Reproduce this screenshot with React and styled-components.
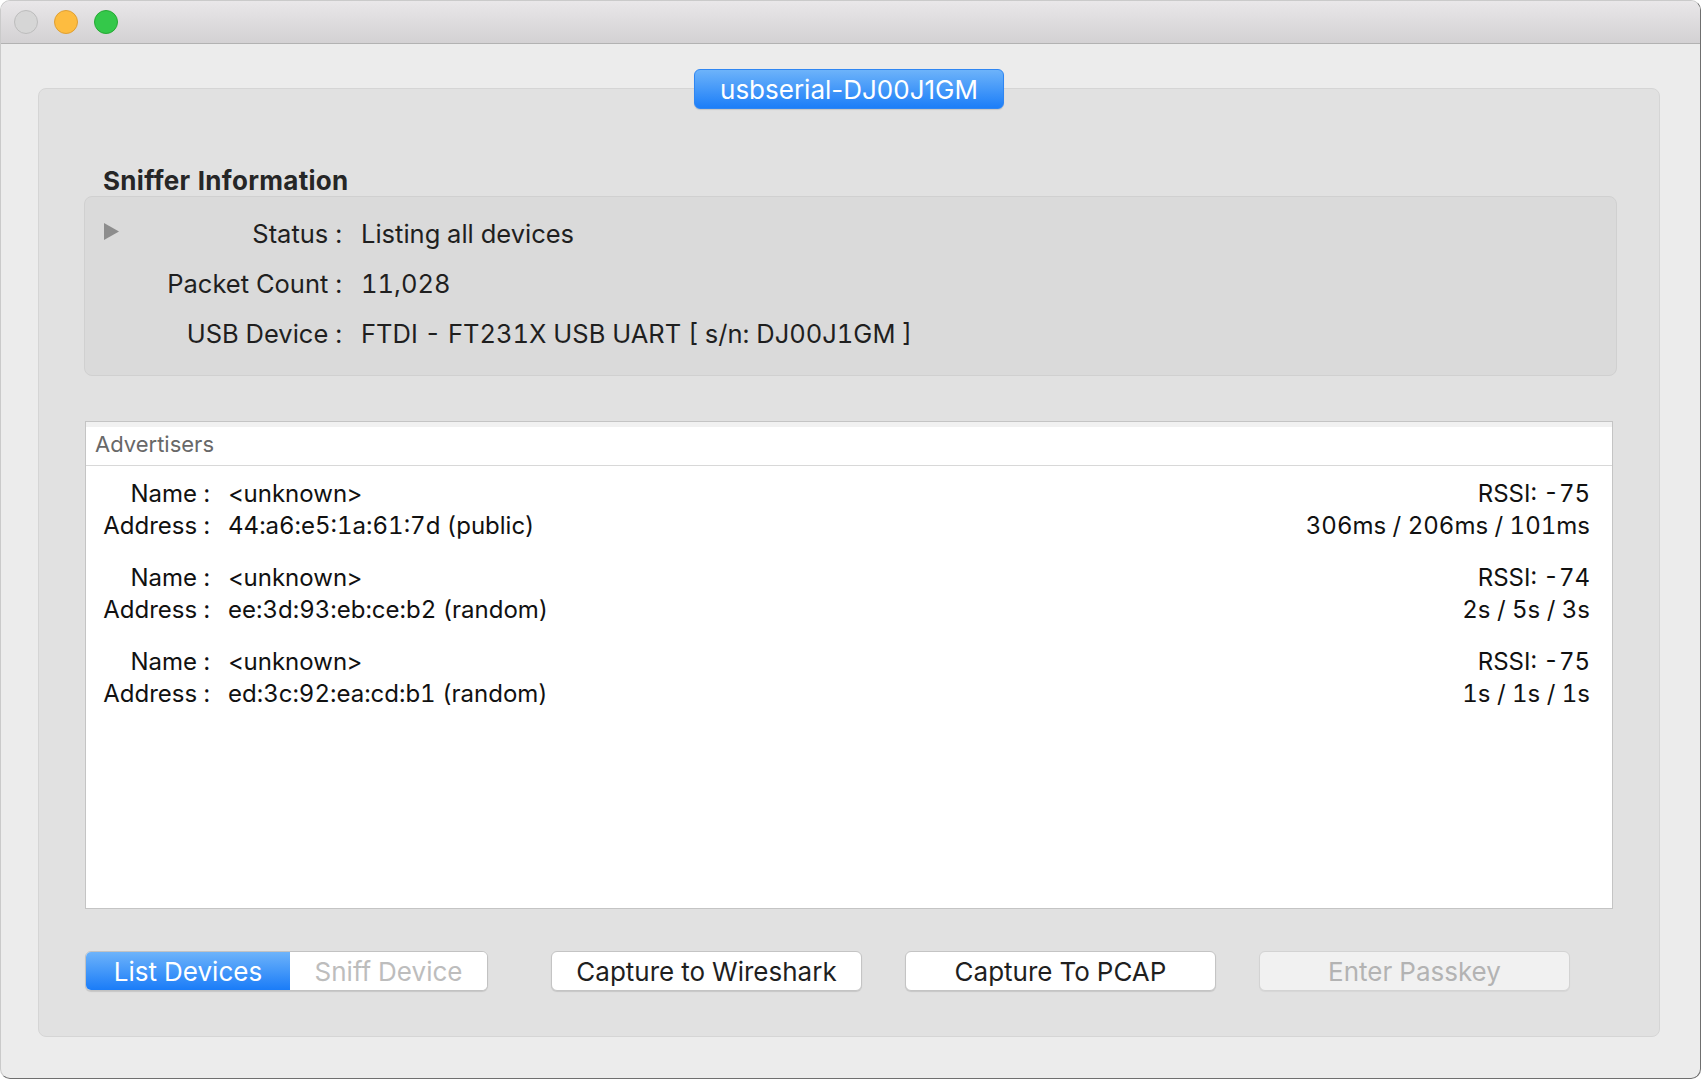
import styled, { createGlobalStyle } from "styled-components";

const GlobalStyle = createGlobalStyle`
  html, body {
    margin: 0;
    padding: 0;
    background: #ffffff;
  }
  body {
    font-family: Inter, "Noto Sans", "Liberation Sans", sans-serif;
    font-feature-settings: "tnum";
    color: #1f1f1f;
  }
  * {
    box-sizing: border-box;
  }
`;

const Window = styled.div`
  width: 1701px;
  height: 1079px;
  display: flex;
  flex-direction: column;
  background: #ececec;
  border: 1px solid #6f6f6f;
  border-top-color: #cacaca;
  border-left-color: #cacaca;
  border-radius: 10px;
  overflow: hidden;
`;

const TitleBar = styled.div`
  flex: none;
  height: 43px;
  display: flex;
  align-items: center;
  gap: 16px;
  padding-left: 13px;
  background: linear-gradient(#e9e7e9, #d3d1d3);
  border-bottom: 1px solid #b2b2b2;
`;

const Light = styled.span`
  width: 24px;
  height: 24px;
  border-radius: 50%;
  background: ${(p) => p.$fill};
  border: 1px solid ${(p) => p.$edge};
`;

const Content = styled.div`
  flex: 1;
  display: flex;
  flex-direction: column;
  padding: 25px 40px 41px 37px;
`;

const TabRow = styled.div`
  position: relative;
  z-index: 1;
  display: flex;
  justify-content: center;
`;

const TabButton = styled.div`
  width: 310px;
  height: 40px;
  display: flex;
  align-items: center;
  justify-content: center;
  border-radius: 6px;
  border: 1px solid #2f86f2;
  background: linear-gradient(#6db3fa, #1c7ef8);
  color: #ffffff;
  font-size: 26px;
  font-feature-settings: normal;
  box-shadow: 0 1px 1px rgba(0, 0, 0, 0.12);
`;

const Group = styled.div`
  flex: 1;
  margin-top: -21px;
  display: flex;
  flex-direction: column;
  padding: 76px 42px 0 45px;
  background: #e1e1e1;
  border: 1px solid #d5d5d5;
  border-radius: 8px;
`;

const Heading = styled.div`
  height: 31px;
  line-height: 31px;
  padding-left: 19px;
  font-size: 26px;
  font-weight: 700;
  letter-spacing: 0.3px;
  color: #262626;
`;

const InfoBox = styled.div`
  height: 180px;
  padding: 11px 0 17px 19px;
  background: #dadada;
  border: 1px solid #d0d0d0;
  border-radius: 8px;
`;

const InfoRow = styled.div`
  height: 50px;
  display: flex;
  align-items: center;
  font-size: 25.5px;
`;

const Disclosure = styled.span`
  width: 15px;
  display: flex;
  align-items: center;
  margin-top: -3px;
`;

const InfoLabel = styled.span`
  width: 223px;
  text-align: right;
  white-space: pre;
`;

const InfoValue = styled.span`
  margin-left: 19px;
`;

const ListBox = styled.div`
  height: 488px;
  margin: 45px 4px 0 1px;
  display: flex;
  flex-direction: column;
  background: #ffffff;
  border: 1px solid #c4c4c4;
`;

const ListHeader = styled.div`
  height: 44px;
  display: flex;
  align-items: center;
  padding: 1px 0 0 9px;
  font-size: 22px;
  color: #686868;
  background: linear-gradient(#f1f1f1 0 5px, #ffffff 5px);
  border-bottom: 1px solid #d8d8d8;
`;

const Entries = styled.div`
  display: flex;
  flex-direction: column;
  gap: 20px;
  padding: 12px 22px 0 0;
`;

const Entry = styled.div`
  display: grid;
  grid-template-columns: 124px 1fr auto;
  column-gap: 18px;
  font-size: 24px;
  line-height: 32px;
  color: #111111;
`;

const EntryLabel = styled.span`
  text-align: right;
  white-space: pre;
`;

const EntryRight = styled.span`
  text-align: right;
`;

const ButtonRow = styled.div`
  display: flex;
  align-items: center;
  margin: 42px 0 0 1px;
`;

const Segmented = styled.div`
  width: 403px;
  height: 40px;
  display: flex;
  border-radius: 6px;
  overflow: hidden;
  border: 1px solid #c2c2c2;
  background: #ffffff;
  box-shadow: 0 1px 1px rgba(0, 0, 0, 0.12);
`;

const Segment = styled.div`
  width: ${(p) => p.$width}px;
  display: flex;
  align-items: center;
  justify-content: center;
  font-size: 26px;
  color: ${(p) => (p.$active ? "#ffffff" : "#bdbdbd")};
  background: ${(p) =>
    p.$active ? "linear-gradient(#6db3fa, #1a7cf8)" : "#ffffff"};
`;

const Button = styled.div`
  width: 311px;
  height: 40px;
  margin-left: ${(p) => p.$gap}px;
  display: flex;
  align-items: center;
  justify-content: center;
  border-radius: 6px;
  font-size: 26px;
  color: ${(p) => (p.$disabled ? "#b3b3b3" : "#1f1f1f")};
  background: ${(p) => (p.$disabled ? "#f1f1f1" : "#ffffff")};
  border: 1px solid ${(p) => (p.$disabled ? "#d3d3d3" : "#c4c4c4")};
  box-shadow: 0 1px 1px rgba(0, 0, 0, ${(p) => (p.$disabled ? 0.05 : 0.12)});
`;

const info = [
  { label: "Status :", value: "Listing all devices" },
  { label: "Packet Count :", value: "11,028" },
  { label: "USB Device :", value: "FTDI - FT231X USB UART [ s/n: DJ00J1GM ]" },
];

const advertisers = [
  { name: "<unknown>", address: "44:a6:e5:1a:61:7d (public)", rssi: -75, timing: "306ms / 206ms / 101ms" },
  { name: "<unknown>", address: "ee:3d:93:eb:ce:b2 (random)", rssi: -74, timing: "2s / 5s / 3s" },
  { name: "<unknown>", address: "ed:3c:92:ea:cd:b1 (random)", rssi: -75, timing: "1s / 1s / 1s" },
];

export default function App() {
  return (
    <>
      <GlobalStyle />
      <Window>
        <TitleBar>
          <Light $fill="#d6d6d6" $edge="#bcbcbc" />
          <Light $fill="#fdbc40" $edge="#de9f34" />
          <Light $fill="#34c84a" $edge="#26a934" />
        </TitleBar>

        <Content>
          <TabRow>
            <TabButton>usbserial-DJ00J1GM</TabButton>
          </TabRow>

          <Group>
            <Heading>Sniffer Information</Heading>
            <InfoBox>
              {info.map((row, i) => (
                <InfoRow key={row.label}>
                  <Disclosure>
                    {i === 0 && (
                      <svg width="15" height="17" viewBox="0 0 15 17">
                        <polygon points="0,0 15,8.5 0,17" fill="#8d8d8d" />
                      </svg>
                    )}
                  </Disclosure>
                  <InfoLabel>{row.label}</InfoLabel>
                  <InfoValue>{row.value}</InfoValue>
                </InfoRow>
              ))}
            </InfoBox>

            <ListBox>
              <ListHeader>Advertisers</ListHeader>
              <Entries>
                {advertisers.map((a) => (
                  <Entry key={a.address}>
                    <EntryLabel>Name :</EntryLabel>
                    <span>{a.name}</span>
                    <EntryRight>RSSI: {a.rssi}</EntryRight>
                    <EntryLabel>Address :</EntryLabel>
                    <span>{a.address}</span>
                    <EntryRight>{a.timing}</EntryRight>
                  </Entry>
                ))}
              </Entries>
            </ListBox>

            <ButtonRow>
              <Segmented>
                <Segment $active $width={204}>List Devices</Segment>
                <Segment $width={197}>Sniff Device</Segment>
              </Segmented>
              <Button $gap={63}>Capture to Wireshark</Button>
              <Button $gap={43}>Capture To PCAP</Button>
              <Button $gap={43} $disabled>Enter Passkey</Button>
            </ButtonRow>
          </Group>
        </Content>
      </Window>
    </>
  );
}
